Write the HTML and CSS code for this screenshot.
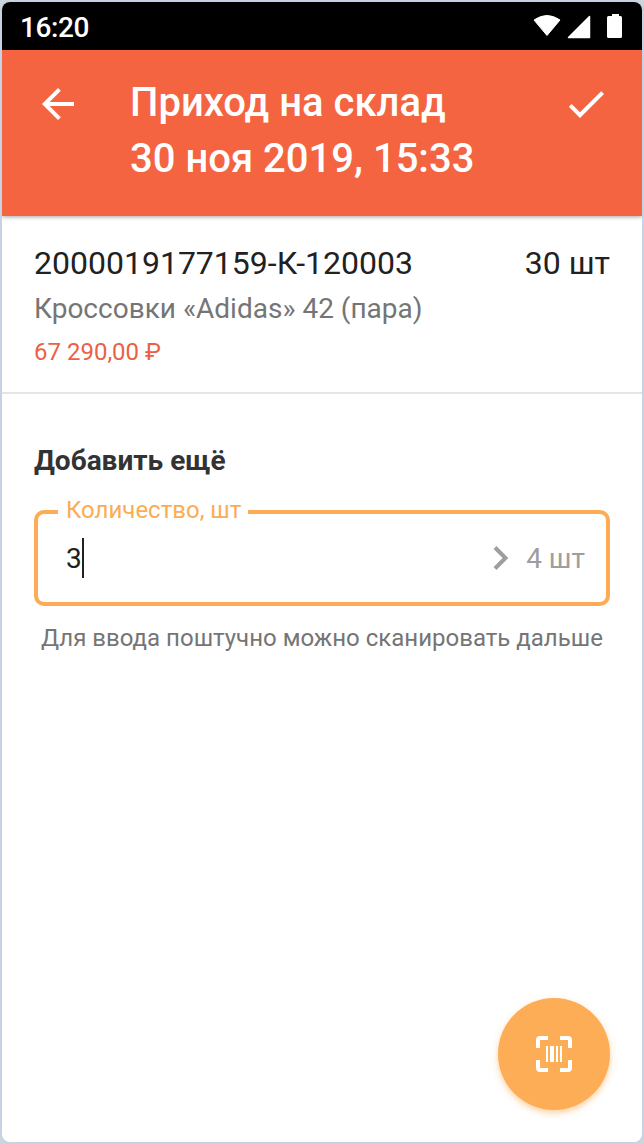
FILE: index.html
```html
<!DOCTYPE html>
<html lang="ru">
<head>
<meta charset="utf-8">
<title>Приход на склад</title>
<link rel="stylesheet" href="styles.css">
</head>
<body>
<div class="phone">
  <div class="statusbar">
    <span class="clock">16:20</span>
    <svg class="status-icons" width="92" height="26" viewBox="0 0 92 26" fill="#fff">
      <path d="M2 7Q15-2 28 7L15 22.500Z" stroke="#fff" stroke-width="1" stroke-linejoin="round"/>
      <path d="M57.500 3.500V24.500H36.500Z" stroke="#fff" stroke-width="1.500" stroke-linejoin="round"/>
      <path d="M80 1h7v2h1.500q1.500 0 1.500 1.500v19q0 1.500-1.500 1.500h-12q-1.500 0-1.500-1.500v-19q0-1.500 1.500-1.500h3.500z"/>
    </svg>
  </div>
  <header class="appbar">
    <svg class="back" width="48" height="48" viewBox="0 0 24 24" fill="#fff"><path d="M20 11H7.830l5.590-5.590L12 4l-8 8 8 8 1.410-1.410L7.830 13H20v-2z"/></svg>
    <h1 class="title">Приход на склад<br>30 ноя 2019, 15:33</h1>
    <svg class="done" width="48" height="48" viewBox="0 0 24 24" fill="#fff"><path d="M9 16.170L4.830 12l-1.420 1.410L9 19 21 7l-1.410-1.410z"/></svg>
  </header>
  <section class="item">
    <div class="item-row"><span>2000019177159-К-120003</span><span>30 шт</span></div>
    <div class="item-name">Кроссовки «Adidas» 42 (пара)</div>
    <div class="item-price">67 290,00 ₽</div>
  </section>
  <main class="form">
    <h2 class="form-title">Добавить ещё</h2>
    <div class="field">
      <span class="label">Количество, шт</span>
      <span class="value">3</span><span class="caret"></span>
      <svg class="chevron" width="16" height="24" viewBox="0 0 16 24" fill="none" stroke="#9e9e9e" stroke-width="4"><path d="M2 1.500L12.500 12L2 22.500"/></svg>
      <span class="total">4 шт</span>
    </div>
    <p class="hint">Для ввода поштучно можно сканировать дальше</p>
  </main>
  <button class="fab" aria-label="Сканировать">
    <svg width="36" height="36" viewBox="0 0 36 36">
      <path d="M2 12V4Q2 2 4 2H12M24 2H32Q34 2 34 4V12M34 24V32Q34 34 32 34H24M12 34H4Q2 34 2 32V24" fill="none" stroke="#fff" stroke-width="4"/>
      <path d="M10 10h2v16h-2zM14 10h4v16h-4zM20 10h2v16h-2zM24 10h2v16h-2z" fill="#fff"/>
    </svg>
  </button>
</div>
</body>
</html>
```
FILE: styles.css
```css
* { box-sizing: border-box; }
body { margin: 0; background: #cdd5da; font-family: Roboto, sans-serif; }
.phone {
  width: 644px; height: 1144px; overflow: hidden;
  display: flex; flex-direction: column;
  border: 2px solid #c7d3e2; border-radius: 10px; background: #fff;
}
.statusbar {
  flex: none; height: 48px; padding: 0 18px 0 18px;
  display: flex; align-items: center; justify-content: space-between;
  background: #000; color: #fff;
}
.clock { font-size: 28px; font-weight: 500; line-height: 48px; padding-top: 3px; letter-spacing: -.4px; }
.appbar {
  flex: none; height: 166px; padding: 24px 32px 0;
  display: flex; align-items: flex-start;
  background: #f46440; color: #fff; box-shadow: 0 1px 4px rgba(0,0,0,.35);
}
.back, .done { flex: none; margin-top: 6px; }
.title { flex: 1; margin: 1px 0 0 48px; font-size: 40px; font-weight: 500; line-height: 56px; white-space: nowrap; }
.item { flex: none; height: 178px; padding: 24px 32px 0; border-bottom: 2px solid #e5e5e5; }
.item-row { display: flex; justify-content: space-between; font-size: 32px; line-height: 46px; color: #212121; }
.item-name { font-size: 28px; line-height: 46px; color: #757575; }
.item-price { font-size: 24px; line-height: 40px; color: #ec6143; }
.form { padding: 47px 32px 0; }
.form-title { margin: 0; font-size: 28px; font-weight: 700; line-height: 40px; color: #333; }
.field {
  position: relative; margin-top: 29px; height: 96px; padding: 0 21px 0 28px;
  display: flex; align-items: center;
  border: 4px solid #fcac54; border-radius: 10px;
  font-size: 28px; line-height: 40px;
}
.label {
  position: absolute; left: 20px; top: -20px; padding: 0 7px 0 8px;
  background: #fff; color: #fcac54; font-size: 24px; line-height: 32px; white-space: nowrap;
}
.value { padding-top: 2px; color: #212121; }
.caret { width: 2px; height: 40px; background: #212121; }
.chevron { margin-left: auto; }
.total { margin-left: 17px; padding-top: 2px; color: #9e9e9e; }
.hint { margin: 16px 0 0; font-size: 24px; line-height: 32px; text-align: center; color: #757575; white-space: nowrap; }
.fab {
  flex: none; width: 112px; height: 112px; margin: auto 32px 32px auto; padding: 0;
  display: flex; align-items: center; justify-content: center;
  border: 0; border-radius: 50%; background: #fdad55; box-shadow: 0 3px 6px rgba(253,165,70,.5);
}
```
